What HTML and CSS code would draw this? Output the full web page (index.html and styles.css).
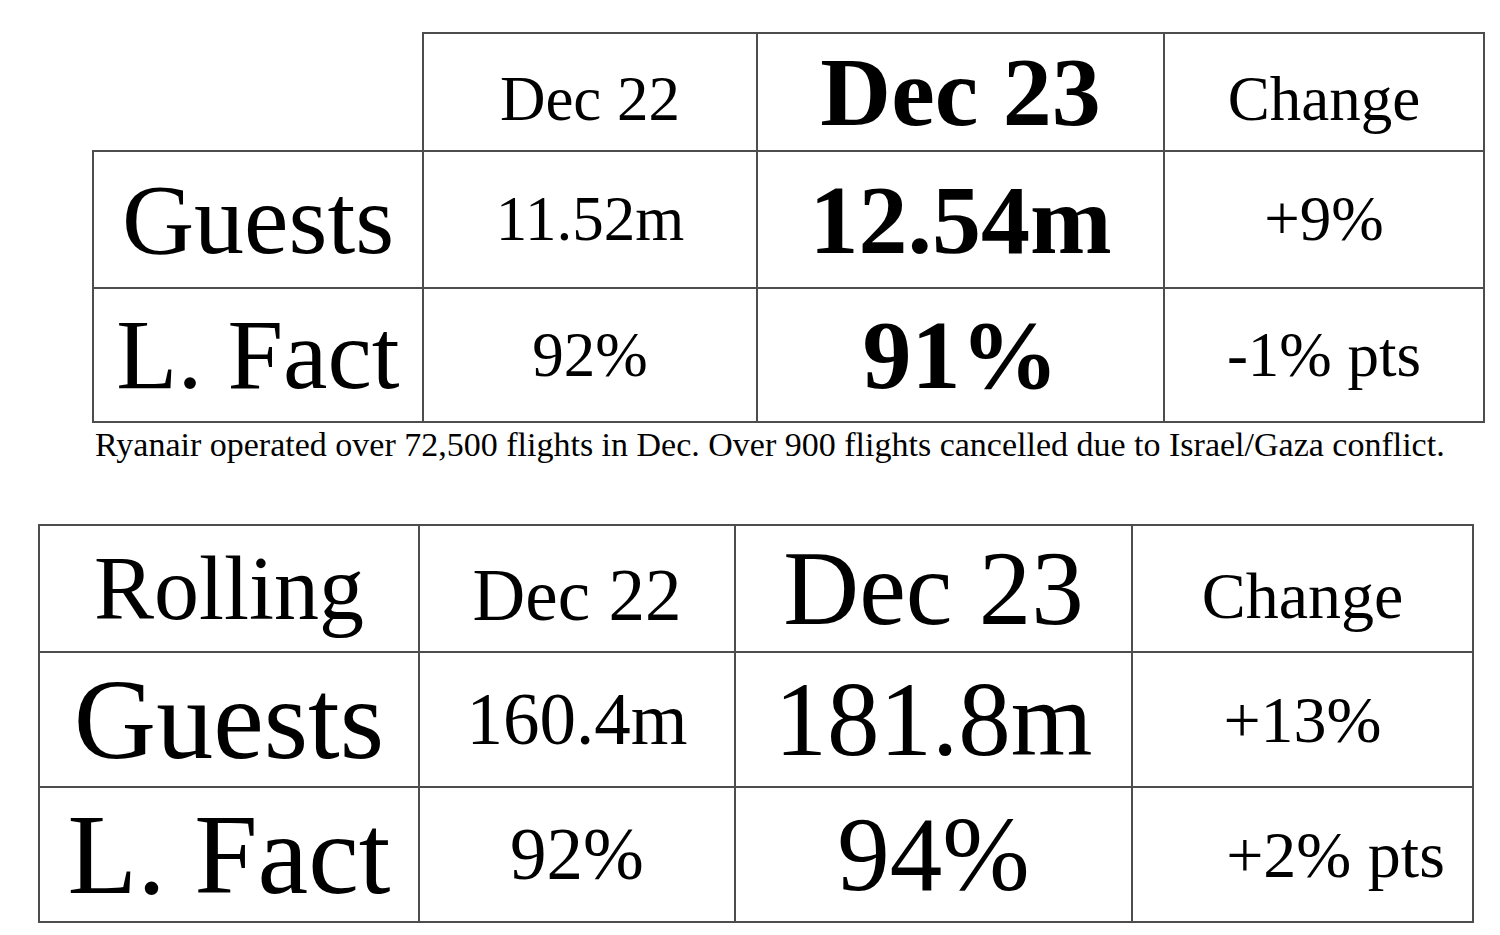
FILE: index.html
```html
<!DOCTYPE html>
<html>
<head>
<meta charset="utf-8">
<link rel="stylesheet" href="styles.css">
</head>
<body>
<main class="page">
  <section class="block block-month">
    <table class="stats stats-month">
      <colgroup>
        <col class="c1"><col class="c2"><col class="c3"><col class="c4">
      </colgroup>
      <tr class="head">
        <td class="blank"></td>
        <td class="small hd-low">Dec 22</td>
        <td class="huge bold">Dec 23</td>
        <td class="small hd-low">Change</td>
      </tr>
      <tr class="row">
        <td class="label">Guests</td>
        <td class="small">11.52m</td>
        <td class="huge bold">12.54m</td>
        <td class="small">+9%</td>
      </tr>
      <tr class="row">
        <td class="label">L. Fact</td>
        <td class="small">92%</td>
        <td class="huge bold">91%</td>
        <td class="small">-1% pts</td>
      </tr>
    </table>
    <p class="note">Ryanair operated over 72,500 flights in Dec. Over 900 flights cancelled due to Israel/Gaza conflict.</p>
  </section>

  <section class="block block-rolling">
    <table class="stats stats-rolling">
      <colgroup>
        <col class="c1"><col class="c2"><col class="c3"><col class="c4">
      </colgroup>
      <tr class="head">
        <td class="label-r">Rolling</td>
        <td class="mid hd-low">Dec 22</td>
        <td class="big">Dec 23</td>
        <td class="chg hd-low">Change</td>
      </tr>
      <tr class="row">
        <td class="label">Guests</td>
        <td class="mid">160.4m</td>
        <td class="big">181.8m</td>
        <td class="chg">+13%</td>
      </tr>
      <tr class="row">
        <td class="label">L. Fact</td>
        <td class="mid">92%</td>
        <td class="big">94%</td>
        <td class="chg shift">+2% pts</td>
      </tr>
    </table>
  </section>
</main>
</body>
</html>
```

FILE: styles.css
```css
html, body {
  margin: 0;
  padding: 0;
  background: #ffffff;
}

body {
  width: 1500px;
  height: 935px;
  overflow: hidden;
  font-family: "Liberation Serif", "Times New Roman", serif;
  color: #000;
}

.page {
  display: flex;
  flex-direction: column;
  padding-top: 32px;
}

.stats {
  border-collapse: collapse;
  table-layout: fixed;
}

.stats td {
  border: 2px solid #4d4d4d;
  text-align: center;
  vertical-align: middle;
  padding: 0;
  line-height: 1;
  white-space: nowrap;
}

.stats td.blank {
  border: none;
}

/* ---------- month table ---------- */
.block-month {
  margin-left: 92px;
}

.stats-month {
  width: 1391px;
}

.stats-month .c1 { width: 330px; }
.stats-month .c2 { width: 334px; }
.stats-month .c3 { width: 407px; }
.stats-month .c4 { width: 320px; }

.stats-month .head { height: 118px; }
.stats-month .row:nth-child(2) { height: 137px; }
.stats-month .row { height: 134px; }

.stats-month .small { font-size: 63px; }
.stats-month .huge { font-size: 98px; }
.stats-month .label { font-size: 100px; }

.bold { font-weight: bold; }

.hd-low { padding-top: 14px !important; }

.note {
  margin: 3px 0 0 3px;
  font-size: 34px;
  line-height: 1.1;
}

/* ---------- rolling table ---------- */
.block-rolling {
  margin-top: 61px;
  margin-left: 38px;
}

.stats-rolling {
  width: 1434px;
}

.stats-rolling .c1 { width: 380px; }
.stats-rolling .c2 { width: 316px; }
.stats-rolling .c3 { width: 397px; }
.stats-rolling .c4 { width: 341px; }

.stats-rolling .head { height: 127px; }
.stats-rolling .row { height: 135px; }

.stats-rolling .label-r { font-size: 90px; }
.stats-rolling .label { font-size: 114px; }
.stats-rolling .mid { font-size: 73px; }
.stats-rolling .big { font-size: 105px; }
.stats-rolling .chg { font-size: 66px; }

.stats-rolling .shift { padding-left: 66px; }
```
